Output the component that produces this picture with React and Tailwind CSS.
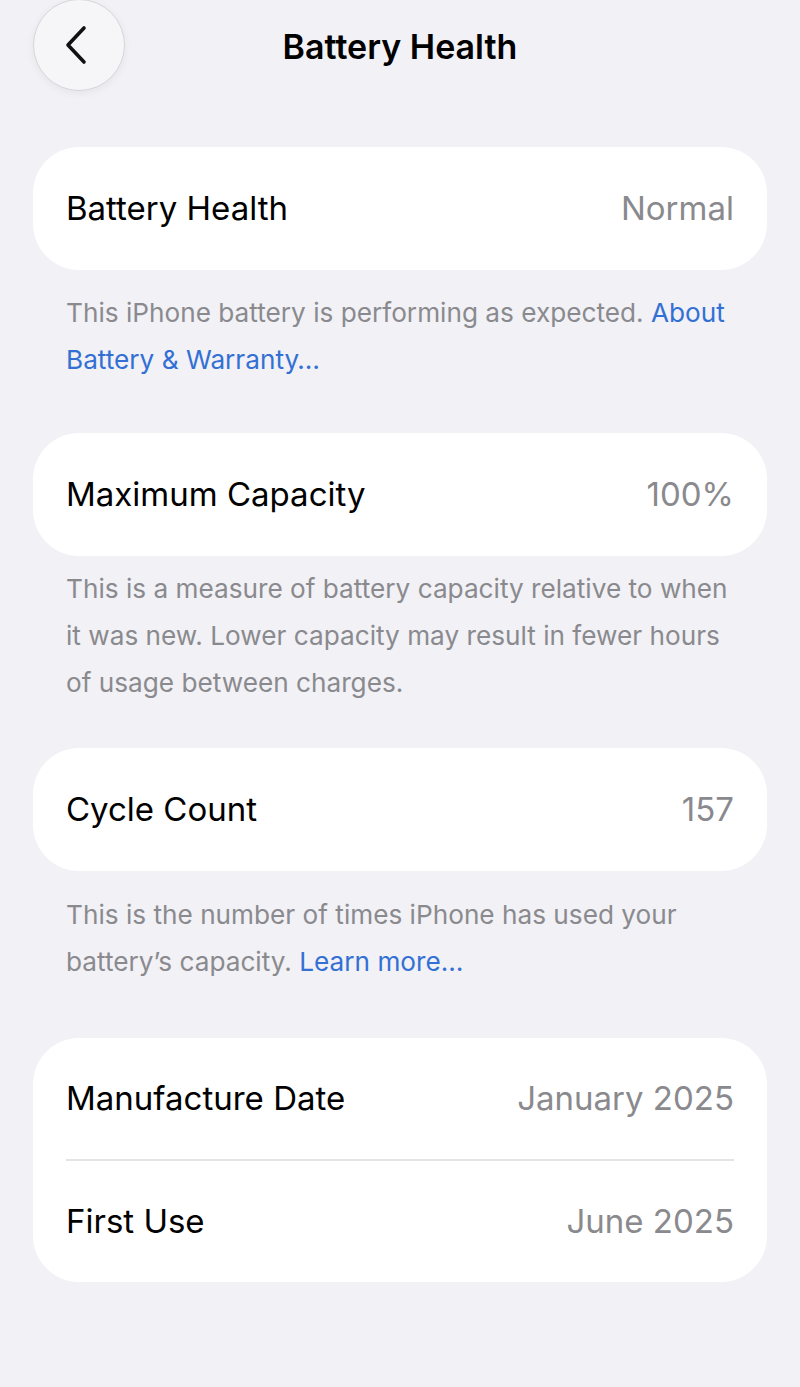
const Row = ({ label, value }) => (
  <div className="flex h-[123px] items-center justify-between px-[33px]">
    <span className="text-[33px] text-black">{label}</span>
    <span className="text-[33px] text-[#8a8a8e]">{value}</span>
  </div>
);

const Footer = ({ className, children }) => (
  <p className={`px-[33px] text-[26.2px] leading-[47px] text-[#8a8a8e] ${className}`}>{children}</p>
);

const Link = ({ children }) => <span className="text-[#3370d4]">{children}</span>;

export default function App() {
  return (
    <div className="min-h-[1387px] bg-[#f1f1f6] px-[33px] font-['Inter',sans-serif]">
      {/* nav bar */}
      <div className="grid h-[92px] grid-cols-[92px_1fr_92px] items-center">
        <button className="flex h-[92px] w-[92px] -translate-y-[1px] items-center justify-center rounded-full border border-[#d6d6da] bg-[#f6f6f9] shadow-[0_2px_8px_rgba(0,0,0,0.06)]">
          <svg width="26" height="40" viewBox="0 0 26 40" fill="none" className="-ml-[6px]">
            <path d="M21 3 L5 20 L21 37" stroke="#111" strokeWidth="3.6" strokeLinecap="round" strokeLinejoin="round" />
          </svg>
        </button>
        <h1 className="text-center text-[34px] font-semibold text-black">Battery Health</h1>
        <div />
      </div>

      <div className="mt-[55px] overflow-hidden rounded-[46px] bg-white">
        <Row label="Battery Health" value="Normal" />
      </div>
      <Footer className="mt-[19px]">
        This iPhone battery is performing as expected. <Link>About Battery &amp; Warranty…</Link>
      </Footer>

      <div className="mt-[50px] overflow-hidden rounded-[46px] bg-white">
        <Row label="Maximum Capacity" value="100%" />
      </div>
      <Footer className="mt-[9px]">
        This is a measure of battery capacity relative to when it was new. Lower capacity may result in fewer hours of usage between charges.
      </Footer>

      <div className="mt-[42px] overflow-hidden rounded-[46px] bg-white">
        <Row label="Cycle Count" value="157" />
      </div>
      <Footer className="mt-[20px]">
        This is the number of times iPhone has used your battery’s capacity. <Link>Learn more…</Link>
      </Footer>

      <div className="mt-[53px] overflow-hidden rounded-[46px] bg-white">
        <div className="flex h-[121px] items-center justify-between px-[33px]">
          <span className="text-[33px] text-black">Manufacture Date</span>
          <span className="text-[33px] text-[#8a8a8e]">January 2025</span>
        </div>
        <div className="mx-[33px] h-[2px] bg-[#e4e4e8]" />
        <div className="flex h-[121px] items-center justify-between px-[33px]">
          <span className="text-[33px] text-black">First Use</span>
          <span className="text-[33px] text-[#8a8a8e]">June 2025</span>
        </div>
      </div>
    </div>
  );
}
